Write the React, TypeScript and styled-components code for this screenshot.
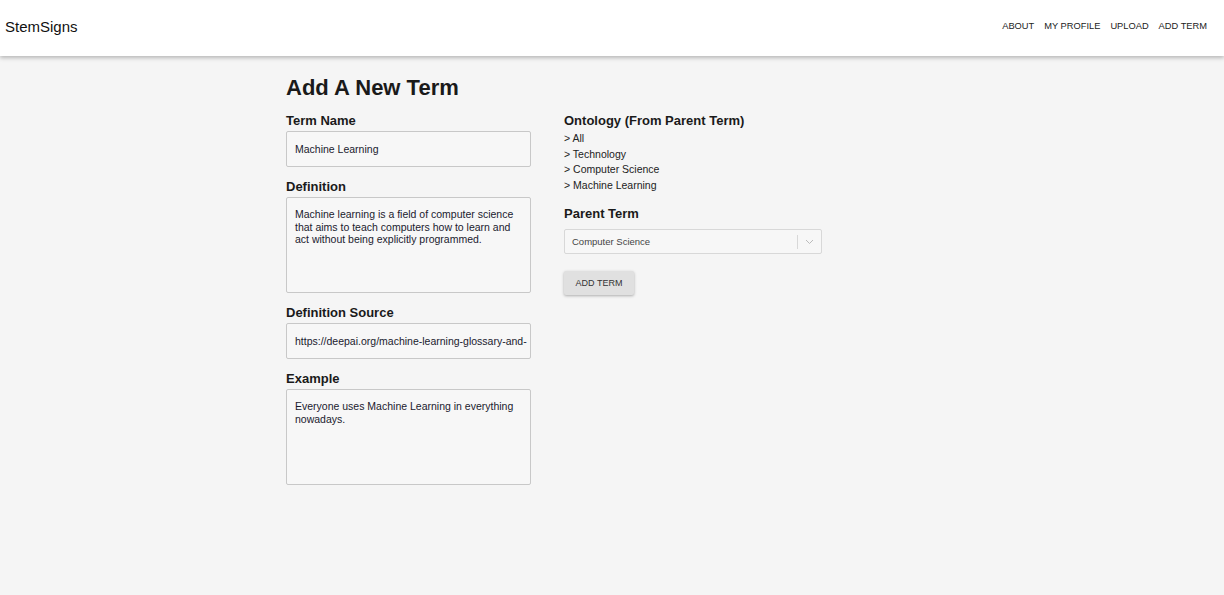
import React from 'react';
import styled, { createGlobalStyle } from 'styled-components';

const GlobalStyle = createGlobalStyle`
  body {
    margin: 0;
    background: #f5f5f5;
    font-family: "Liberation Sans", Arial, sans-serif;
    color: #1a1a1a;
  }
`;

const TopBar = styled.header`
  height: 56px;
  background: #fff;
  display: flex;
  align-items: center;
  justify-content: space-between;
  padding: 0 17px 0 5px;
  box-shadow: 0 2px 4px rgba(0, 0, 0, 0.25);
  position: relative;
  z-index: 1;
`;

const Brand = styled.div`
  font-size: 15px;
  color: #111;
  margin-top: -4px;
`;

const Nav = styled.nav`
  display: flex;
  gap: 10px;
  margin-top: -4px;
`;

const NavLink = styled.a`
  font-size: 9.3px;
  text-transform: uppercase;
  color: #222;
  text-decoration: none;
`;

const Page = styled.main`
  min-height: 539px;
  padding: 19px 0 0 286px;
  box-sizing: border-box;
`;

const Title = styled.h1`
  font-size: 22px;
  font-weight: bold;
  margin: 0 0 13px;
  line-height: 25px;
`;

const Columns = styled.div`
  display: grid;
  grid-template-columns: 245px 258px;
  column-gap: 33px;
  align-items: start;
`;

const Column = styled.div`
  display: flex;
  flex-direction: column;
`;

const Label = styled.div<{ $gap?: number }>`
  font-size: 13px;
  font-weight: bold;
  line-height: 16px;
  margin-bottom: ${(p) => p.$gap ?? 2}px;
`;

const Field = styled.div<{ $tall?: boolean }>`
  box-sizing: border-box;
  height: ${(p) => (p.$tall ? 96 : 36)}px;
  border: 1px solid #c8c8c8;
  border-radius: 2px;
  background: #f7f7f7;
  padding: ${(p) => (p.$tall ? '10px 8px' : '0 8px')};
  display: flex;
  align-items: ${(p) => (p.$tall ? 'flex-start' : 'center')};
  font-size: 10.5px;
  line-height: 12.5px;
  color: #1a1a2e;
  margin-bottom: 12px;
  overflow: hidden;
  white-space: ${(p) => (p.$tall ? 'normal' : 'nowrap')};
`;

const Crumbs = styled.ul`
  list-style: none;
  margin: 2px 0 13px;
  padding: 0;
  font-size: 10.5px;
  line-height: 15.5px;
  color: #222;
`;

const Select = styled.div`
  box-sizing: border-box;
  height: 25px;
  border: 1px solid #d8d8d8;
  border-radius: 2px;
  background: #f7f7f7;
  display: flex;
  align-items: center;
  font-size: 9.5px;
  color: #444;
  padding-left: 7px;
  margin-bottom: 17px;
`;

const SelectValue = styled.span`
  flex: 1;
`;

const Separator = styled.span`
  width: 1px;
  height: 14px;
  background: #d8d8d8;
`;

const Chevron = styled.span`
  width: 23px;
  display: flex;
  justify-content: center;
`;

const Button = styled.button`
  align-self: flex-start;
  width: 70px;
  height: 24px;
  border: none;
  border-radius: 2px;
  background: #e0e0e0;
  box-shadow: 0 1px 3px rgba(0, 0, 0, 0.3);
  font-family: inherit;
  font-size: 9px;
  color: #333;
  text-transform: uppercase;
  padding: 0;
`;

export default function App() {
  return (
    <>
      <GlobalStyle />
      <TopBar>
        <Brand>StemSigns</Brand>
        <Nav>
          <NavLink>About</NavLink>
          <NavLink>My Profile</NavLink>
          <NavLink>Upload</NavLink>
          <NavLink>Add Term</NavLink>
        </Nav>
      </TopBar>
      <Page>
        <Title>Add A New Term</Title>
        <Columns>
          <Column>
            <Label>Term Name</Label>
            <Field>Machine Learning</Field>
            <Label>Definition</Label>
            <Field $tall>
              Machine learning is a field of computer science that aims to teach computers how to learn and act without being explicitly programmed.
            </Field>
            <Label>Definition Source</Label>
            <Field>https://deepai.org/machine-learning-glossary-and-</Field>
            <Label>Example</Label>
            <Field $tall>Everyone uses Machine Learning in everything nowadays.</Field>
          </Column>
          <Column>
            <Label $gap={0}>Ontology (From Parent Term)</Label>
            <Crumbs>
              <li>&gt; All</li>
              <li>&gt; Technology</li>
              <li>&gt; Computer Science</li>
              <li>&gt; Machine Learning</li>
            </Crumbs>
            <Label $gap={7}>Parent Term</Label>
            <Select>
              <SelectValue>Computer Science</SelectValue>
              <Separator />
              <Chevron>
                <svg width="9" height="6" viewBox="0 0 9 6" fill="none" stroke="#bbb" strokeWidth="1">
                  <path d="M1 1l3.5 3.5L8 1" />
                </svg>
              </Chevron>
            </Select>
            <Button>Add Term</Button>
          </Column>
        </Columns>
      </Page>
    </>
  );
}
